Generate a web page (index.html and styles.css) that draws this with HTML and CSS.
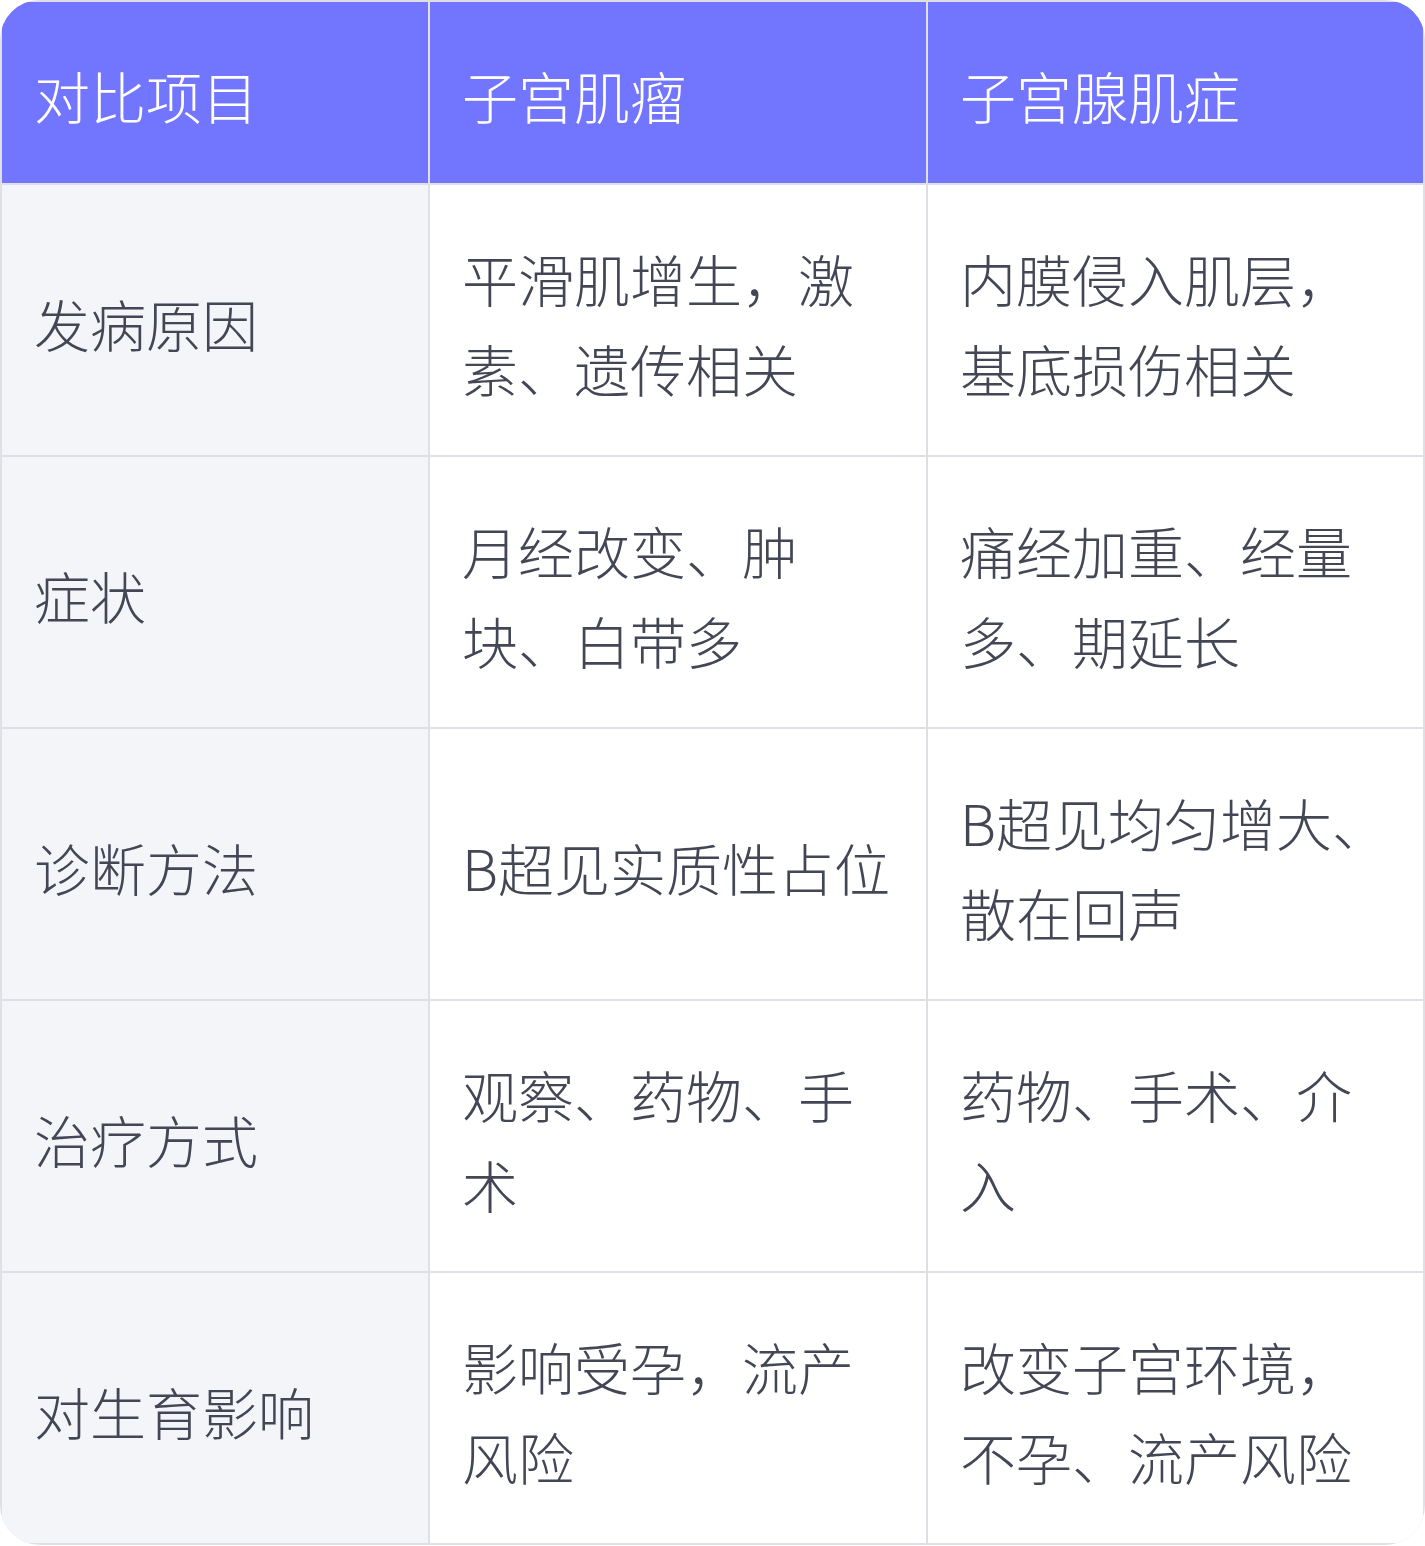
FILE: index.html
```html
<!DOCTYPE html>
<html lang="zh-CN">
<head>
<meta charset="utf-8">
<title>子宫肌瘤 vs 子宫腺肌症</title>
<link rel="stylesheet" href="styles.css">
</head>
<body>
<div class="table">
  <div class="cell head">对比项目</div>
  <div class="cell head">子宫肌瘤</div>
  <div class="cell head">子宫腺肌症</div>

  <div class="cell label">发病原因</div>
  <div class="cell">平滑肌增生，激素、遗传相关</div>
  <div class="cell">内膜侵入肌层，基底损伤相关</div>

  <div class="cell label">症状</div>
  <div class="cell">月经改变、肿块、白带多</div>
  <div class="cell">痛经加重、经量多、期延长</div>

  <div class="cell label">诊断方法</div>
  <div class="cell">B超见实质性占位</div>
  <div class="cell">B超见均匀增大、散在回声</div>

  <div class="cell label">治疗方式</div>
  <div class="cell">观察、药物、手术</div>
  <div class="cell">药物、手术、介入</div>

  <div class="cell label">对生育影响</div>
  <div class="cell">影响受孕，流产风险</div>
  <div class="cell">改变子宫环境，不孕、流产风险</div>
</div>
</body>
</html>
```

FILE: styles.css
```css
html, body {
  margin: 0;
  padding: 0;
  background: #ffffff;
}

.table {
  width: 1425px;
  box-sizing: border-box;
  display: grid;
  grid-template-columns: 426px 496px 495px;
  grid-template-rows: 181px repeat(5, 270px);
  gap: 2px;
  padding: 2px;
  background: #dfe0e5;
  border-radius: 40px;
  overflow: hidden;
  font-family: "Noto Sans CJK SC", "Noto Sans", sans-serif;
  font-weight: 300;
  font-size: 56px;
  line-height: 90px;
  color: #434655;
}

.cell {
  background: #ffffff;
  display: flex;
  align-items: center;
  padding: 5px 18px 0 32px;
  word-break: break-all;
}

.head {
  background: #7276ff;
  color: #ffffff;
}

.label {
  background: #f4f5f9;
}
```
